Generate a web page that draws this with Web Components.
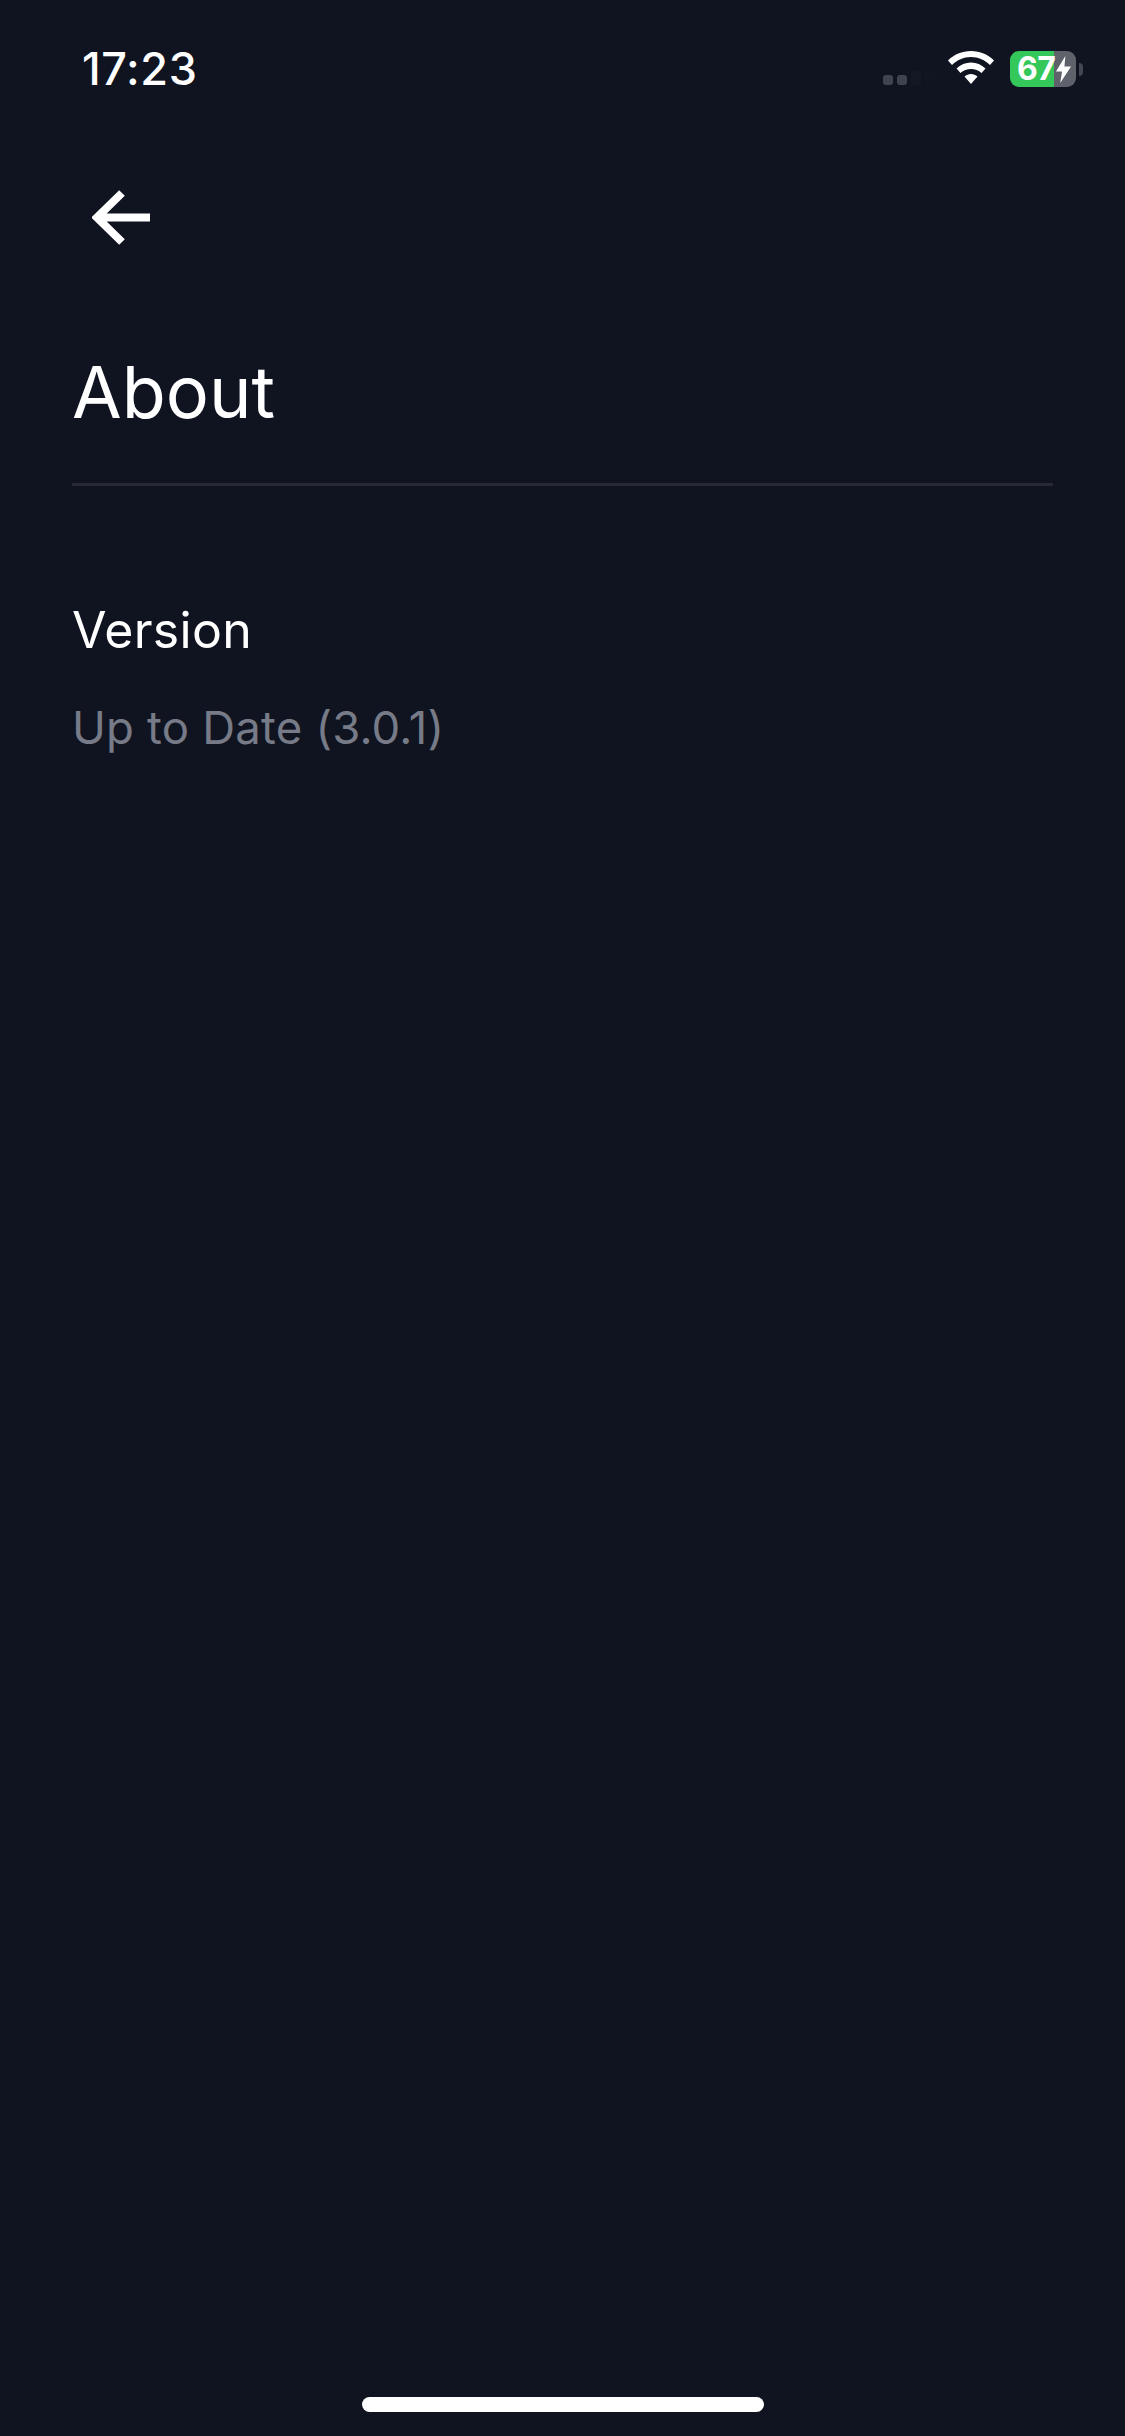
<!DOCTYPE html>
<html lang="en"><head><meta charset="utf-8"><title>About</title>
<style>html,body{margin:0;padding:0;background:#0f1420}</style></head>
<body>
<about-screen>
  <status-bar slot="status" time="17:23" level="67"></status-bar>
  <back-button slot="nav"></back-button>
  <page-title slot="title">About</page-title>
  <info-row label="Version" value="Up to Date (3.0.1)"></info-row>
  <home-bar slot="home"></home-bar>
</about-screen>
<script>
const def=(name,html,setup)=>customElements.define(name,class extends HTMLElement{
  connectedCallback(){ if(this.shadowRoot) return; const r=this.attachShadow({mode:'open'}); r.innerHTML=html; if(setup) setup(r,this);}
});
def('about-screen',`<style>
:host{display:flex;flex-direction:column;width:1125px;height:2436px;background:#0f1420;color:#fff;font-family:Inter,"Noto Sans",sans-serif;overflow:hidden}
main{flex:1;padding:0 72px}
</style>
<slot name="status"></slot><slot name="nav"></slot><slot name="title"></slot>
<main><slot></slot></main>
<slot name="home"></slot>`);
def('status-bar',`<style>
:host{display:flex;align-items:flex-start;justify-content:space-between;height:188px;box-sizing:border-box;padding:45px 42px 0 82px}
.t{font-size:45px;line-height:48px;font-weight:500;letter-spacing:.6px}
.r{display:flex;align-items:flex-start;padding-top:6px}
.sig{display:flex;align-items:flex-end;gap:4px;height:34px;margin-left:2px;width:64px}
.sig i{display:block;width:10px;height:10px;border-radius:3px;background:#3f4350}
.sig i.f{height:14px;background:#141825}
.sig i.f:last-child{background:#111522}
.wifi{width:48px;height:34px}
.bat{position:relative;width:66px;height:36px;margin-left:15px;border-radius:9px;background:linear-gradient(90deg,#34c759 44px,#5f616b 44px)}
.num{position:absolute;left:7px;top:0;font-size:32px;line-height:36px;font-weight:700;letter-spacing:-.6px}
.bolt{position:absolute;left:45px;top:5px;width:17px;height:27px}
.nub{width:4px;height:13px;margin:12px 0 0 3px;border-radius:0 5px 5px 0;background:#434653}
</style>
<div class="t"></div>
<div class="r">
<div class="sig"><i></i><i></i><i class="f"></i><i class="f"></i></div>
<svg class="wifi" viewBox="0 0 48 34"><path fill="#fff" d="M24 0C15 0 7 3.500 1 9.500L5 14C10 9 16.500 6 24 6S38 9 43 14L47 9.500C41 3.500 33 0 24 0ZM24 11.500C18.500 11.500 13.500 13.500 9.500 17.500L13.500 22C16.500 19.500 20 18 24 18S31.500 19.500 34.500 22L38.500 17.500C34.500 13.500 29.500 11.500 24 11.500ZM24 23C21.500 23 19.500 24 17.500 25.500L24 33L30.500 25.500C28.500 24 26.500 23 24 23Z"/></svg>
<div class="bat"><div class="num"></div>
<svg class="bolt" viewBox="0 0 18 27" preserveAspectRatio="none"><path fill="#fff" d="M11 0L1 15.500H7.500L5.500 27L17 10.500H10Z"/></svg></div>
<div class="nub"></div>
</div>`,(r,h)=>{r.querySelector('.t').textContent=h.getAttribute('time');r.querySelector('.num').textContent=h.getAttribute('level');});
def('back-button',`<style>
:host{display:block;height:84px;padding:0 0 0 92px;box-sizing:border-box}
svg{display:block;width:60px;height:56px;margin-top:1px}
</style>
<svg viewBox="0 0 60 56" fill="none" stroke="#fff" stroke-width="8"><path d="M58 28.500H6M30 4L5 28.500L30 53"/></svg>`);
def('page-title',`<style>
:host{display:block;margin:0 72px;padding-top:76px;height:214px;box-sizing:border-box;border-bottom:3px solid #272a36;font-size:72px;line-height:88px;font-weight:400}
</style><slot></slot>`);
def('info-row',`<style>
:host{display:flex;flex-direction:column;padding-top:114px}
.l{font-size:50px;line-height:60px;letter-spacing:.3px}
.v{font-size:45.5px;line-height:60px;margin-top:38px;color:#777b87;letter-spacing:.2px}
</style><div class="l"></div><div class="v"></div>`,(r,h)=>{r.querySelector('.l').textContent=h.getAttribute('label');r.querySelector('.v').textContent=h.getAttribute('value');});
def('home-bar',`<style>
:host{display:flex;justify-content:center;height:39px}
div{width:402px;height:15px;border-radius:8px;background:#fff}
</style><div></div>`);
</script>
</body></html>
